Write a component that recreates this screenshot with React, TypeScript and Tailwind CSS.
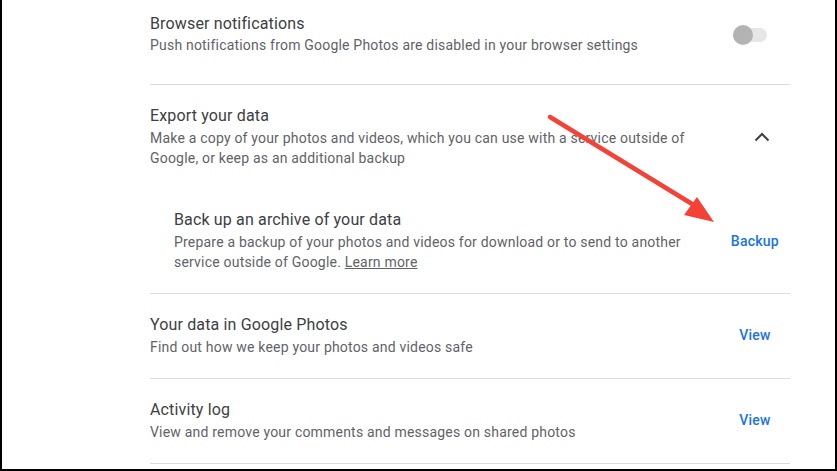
const TITLE = "text-[16px] leading-6 tracking-[0.15px] text-[#3c4043]";
const SUB = "text-[14px] leading-5 tracking-[0.2px] text-[#5f6368]";

function ActionLink({ label }: { label: string }) {
  return (
    <button className="min-w-[64px] px-2 text-center text-[14px] font-medium leading-5 tracking-[0.25px] text-[#1a73e8]">
      {label}
    </button>
  );
}

function Toggle() {
  return (
    <div className="relative h-[14px] w-[34px] rounded-full bg-[#e6e6e6]">
      <div className="absolute -top-[3px] left-0 h-5 w-5 rounded-full bg-[#b3b3b3]" />
    </div>
  );
}

function Arrow() {
  return (
    <svg className="pointer-events-none absolute left-0 top-0" width="837" height="471" viewBox="0 0 837 471">
      <line x1="548" y1="117" x2="695" y2="207" stroke="#f44336" strokeWidth="4.5" strokeLinecap="round" />
      <polygon points="695,197 682,215 712,222" fill="#f44336" />
    </svg>
  );
}

export default function App() {
  return (
    <div className="relative h-[471px] w-[837px] overflow-hidden border-b-2 border-l-2 border-r-2 border-black bg-white font-['Roboto',sans-serif]">
      <div className="ml-[148px] w-[640px]">
        {/* browser notifications */}
        <div className="flex items-start justify-between pb-[29px] pt-[12px]">
          <div>
            <p className={TITLE}>Browser notifications</p>
            <p className={`${SUB} -mt-px`}>Push notifications from Google Photos are disabled in your browser settings</p>
          </div>
          <div className="mr-[23px] mt-[16px]">
            <Toggle />
          </div>
        </div>

        {/* export */}
        <div className="border-t border-[#dadce0] pb-[21px] pt-[19px]">
          <div className="flex items-start justify-between">
            <div className="w-[570px]">
              <p className={TITLE}>Export your data</p>
              <p className={SUB}>
                Make a copy of your photos and videos, which you can use with a service outside of Google, or keep as an
                additional backup
              </p>
            </div>
            <svg className="mr-[20px] mt-[28px]" width="16" height="10" viewBox="0 0 16 10">
              <path d="M1.5 8.5 L8 2 L14.5 8.5" fill="none" stroke="#3c4043" strokeWidth="2" />
            </svg>
          </div>

          <div className="mt-[40px] flex items-center justify-between pl-6">
            <div className="w-[530px]">
              <p className={TITLE}>Back up an archive of your data</p>
              <p className={SUB}>
                Prepare a backup of your photos and videos for download or to send to another service outside of Google.{" "}
                <a className="underline">Learn more</a>
              </p>
            </div>
            <div className="mr-[3px] mt-[2px]">
              <ActionLink label="Backup" />
            </div>
          </div>
        </div>

        {/* your data */}
        <div className="flex items-center justify-between border-t border-[#dadce0] pb-[21px] pt-[19px]">
          <div>
            <p className={TITLE}>Your data in Google Photos</p>
            <p className={SUB}>Find out how we keep your photos and videos safe</p>
          </div>
          <div className="mr-[3px]">
            <ActionLink label="View" />
          </div>
        </div>

        {/* activity */}
        <div className="flex items-center justify-between border-t border-[#dadce0] pb-[21px] pt-[19px]">
          <div>
            <p className={TITLE}>Activity log</p>
            <p className={SUB}>View and remove your comments and messages on shared photos</p>
          </div>
          <div className="mr-[3px]">
            <ActionLink label="View" />
          </div>
        </div>
        <div className="border-t border-[#dadce0]" />
      </div>
      <Arrow />
    </div>
  );
}
